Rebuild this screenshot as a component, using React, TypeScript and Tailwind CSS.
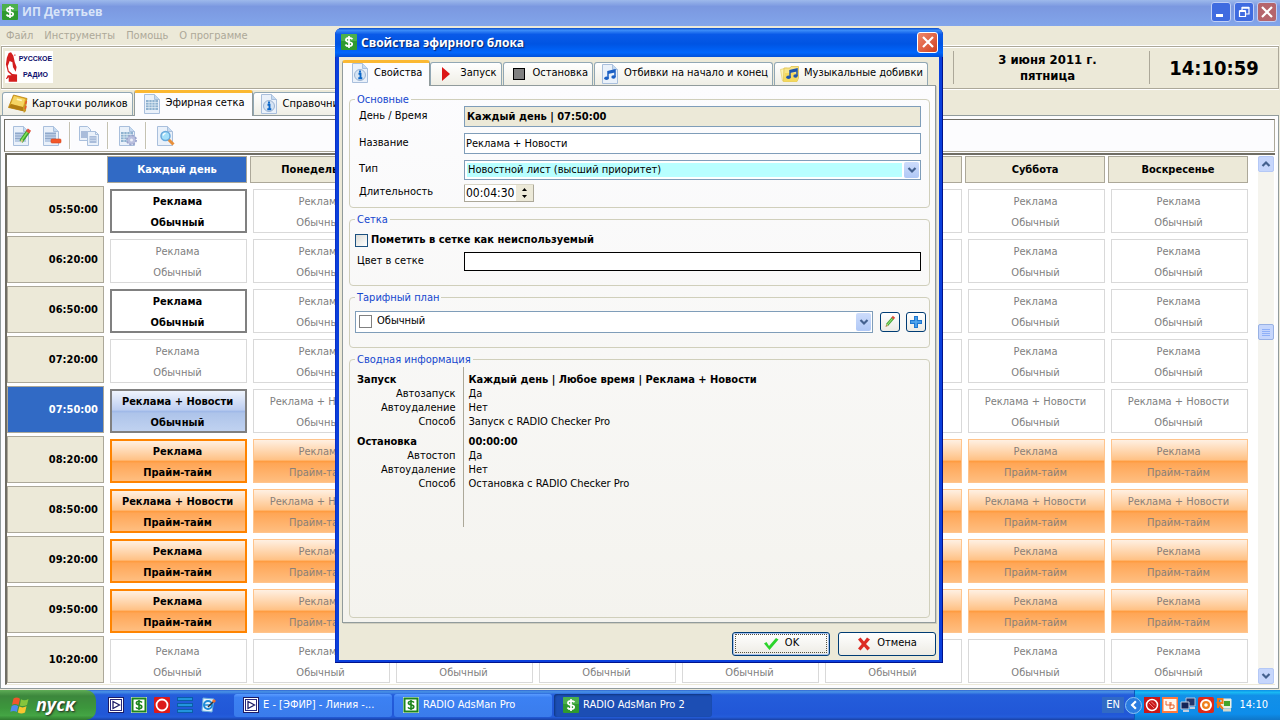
import React from "react";

type IconProps = { className?: string };

const DAYS = ["Каждый день", "Понедельник", "Вторник", "Среда", "Четверг", "Пятница", "Суббота", "Воскресенье"];

type Row = { time: string; title: string; plan: string; daily: boolean; prime?: boolean; selected?: boolean };

const ROWS: Row[] = [
  { time: "05:50:00", title: "Реклама", plan: "Обычный", daily: true },
  { time: "06:20:00", title: "Реклама", plan: "Обычный", daily: false },
  { time: "06:50:00", title: "Реклама", plan: "Обычный", daily: true },
  { time: "07:20:00", title: "Реклама", plan: "Обычный", daily: false },
  { time: "07:50:00", title: "Реклама + Новости", plan: "Обычный", daily: true, selected: true },
  { time: "08:20:00", title: "Реклама", plan: "Прайм-тайм", daily: true, prime: true },
  { time: "08:50:00", title: "Реклама + Новости", plan: "Прайм-тайм", daily: true, prime: true },
  { time: "09:20:00", title: "Реклама", plan: "Прайм-тайм", daily: true, prime: true },
  { time: "09:50:00", title: "Реклама", plan: "Прайм-тайм", daily: true, prime: true },
  { time: "10:20:00", title: "Реклама", plan: "Обычный", daily: false },
];

/* ---------- icons ---------- */

function Dollar({ className = "size-4" }: IconProps) {
  return (
    <svg viewBox="0 0 16 16" className={className} aria-hidden="true">
      <rect width="16" height="16" rx="1" fill="#2f9a2f" />
      <rect width="16" height="7" rx="1" fill="#4cb04c" />
      <path d="M11.500 5.200C10.800 4 9.500 3.800 8 3.800 6.200 3.800 4.900 4.500 4.900 5.900c0 3 6.300 1.200 6.300 4.100 0 1.500-1.400 2.200-3.200 2.200-1.600 0-2.900-.5-3.500-1.700M8 2v12" fill="none" stroke="#fff" strokeWidth="1.700" />
    </svg>
  );
}

function DollarFramed({ className = "size-4" }: IconProps) {
  return (
    <svg viewBox="0 0 16 16" className={className} aria-hidden="true">
      <rect width="16" height="16" fill="#e8f4e8" />
      <rect x="1.500" y="1.500" width="13" height="13" fill="#fff" stroke="#1d851d" strokeWidth="2" />
      <path d="M11 5.500C10.300 4.500 9.300 4.300 8 4.300c-1.500 0-2.600.5-2.600 1.700 0 2.600 5.400 1.200 5.400 3.800 0 1.300-1.200 1.900-2.800 1.900-1.400 0-2.400-.4-3-1.400M8 3v10" fill="none" stroke="#1d851d" strokeWidth="1.600" />
    </svg>
  );
}

function PlayFramed({ className = "size-4" }: IconProps) {
  return (
    <svg viewBox="0 0 16 16" className={className} aria-hidden="true">
      <rect width="16" height="16" fill="#1c1c66" />
      <rect x="1.500" y="1.500" width="13" height="13" fill="#26267c" stroke="#fff" />
      <rect x="3" y="3" width="10" height="10" fill="#fff" />
      <path d="M5 4.500 11.500 8 5 11.500z" fill="#fff" stroke="#1c1c66" strokeWidth="1.300" />
    </svg>
  );
}

function Page({ children, className = "size-[18px]" }: IconProps & { children?: React.ReactNode }) {
  return (
    <svg viewBox="0 0 18 20" className={className} aria-hidden="true">
      <path d="M1.500.5h10l5 5v14h-15z" fill="#eaf1fa" stroke="#a9bfdc" />
      <path d="M11.500.5v5h5" fill="#c5daf0" stroke="#a9bfdc" />
      {children}
    </svg>
  );
}

const InfoPage = ({ className }: IconProps) => (
  <Page className={className}>
    <circle cx="9" cy="12" r="5.500" fill="#d5e3f3" stroke="#9cb4d2" />
    <path d="M9 7.500v2M7.500 10.800H9.500V15M7.300 15.200h4" fill="none" stroke="#0b66c8" strokeWidth="1.900" />
  </Page>
);

const GridPage = ({ className, children }: IconProps & { children?: React.ReactNode }) => (
  <Page className={className}>
    <rect x="3" y="6" width="12" height="10" fill="#8fb2d0" />
    <path d="M3 8.500h12M3 11h12M3 13.500h12M6 6v10M9 6v10M12 6v10" stroke="#e6f0f8" strokeWidth=".7" />
    {children}
  </Page>
);

const TextBlock = () => (
  <>
    <rect x="3" y="6" width="11" height="10" fill="#b9cbe4" />
    <path d="M3 7.500h11M3 10h11M3 12.500h11" stroke="#8fa8cb" />
  </>
);

const EditPage = () => (
  <Page className="h-5 w-[18px] overflow-visible">
    <TextBlock />
    <path d="M9 15.500 16.500 5" stroke="#3aa02c" strokeWidth="4" />
    <path d="M9 15 16 5.200" stroke="#83e05d" strokeWidth="1.500" />
    <path d="m15.500 6.300 2-2.700" stroke="#e0513c" strokeWidth="4" />
    <path d="m8.500 16.800 1-3.300 2 1.500z" fill="#e9c98f" />
  </Page>
);

const DeletePage = () => (
  <Page className="h-5 w-[18px] overflow-visible">
    <TextBlock />
    <rect x="9" y="13" width="10" height="4" rx="1" fill="#f2572a" stroke="#d8431c" strokeWidth=".6" />
  </Page>
);

const CopyPages = () => (
  <svg viewBox="0 0 20 20" className="size-5" aria-hidden="true">
    <path d="M.5.5h8l3 3v11H.5z" fill="#eaf1fa" stroke="#a9bfdc" />
    <path d="M2 5h8v7H2z" fill="#a9bcda" />
    <path d="M8.500 5.500h8l3 3v11h-11z" fill="#eaf1fa" stroke="#a9bfdc" />
    <path d="M16.500 5.500v3h3" fill="none" stroke="#a9bfdc" />
    <path d="M10.500 10h7v7h-7z" fill="#a9bcda" />
    <path d="M10.500 12h7M10.500 14.500h7" stroke="#c8d6ea" />
  </svg>
);

const GearPage = () => (
  <GridPage className="h-5 w-[18px] overflow-visible">
    <circle cx="13.500" cy="14" r="4.500" fill="#b3b9da" stroke="#9aa3cc" strokeWidth="2" strokeDasharray="2 1.500" />
    <circle cx="13.500" cy="14" r="3.800" fill="#b9bfde" />
    <circle cx="13.500" cy="14" r="1.500" fill="#eef0f9" />
  </GridPage>
);

const SearchPage = () => (
  <Page className="h-5 w-[18px] overflow-visible">
    <path d="m12 13 5.500 5.500" stroke="#e88f3a" strokeWidth="3" />
    <circle cx="9.500" cy="10" r="4.500" fill="#a4e0fa" stroke="#69a9dc" strokeWidth="1.500" />
    <path d="M7 9.500a3 3 0 0 1 2.500-2.200" fill="none" stroke="#fff" strokeWidth="1.200" />
  </Page>
);

const NoteGlyph = ({ color = "#1b5fc4" }: { color?: string }) => (
  <>
    <path d="M7 14V7.500l7-1.500v7" fill="none" stroke={color} strokeWidth="1.500" />
    <path d="M7 7.500 14 6v2.500L7 10z" fill={color} />
    <ellipse cx="5.500" cy="14.300" rx="2.300" ry="1.800" fill={color} />
    <ellipse cx="12.500" cy="13" rx="2.200" ry="1.800" fill={color} />
  </>
);

const NotePage = () => (
  <Page className="h-5 w-[18px]">
    <NoteGlyph />
  </Page>
);

const NoteFolder = () => (
  <svg viewBox="0 0 20 18" className="h-[18px] w-5" aria-hidden="true">
    <path d="m.5 4.500 6-1.500 1 12-5 1z" fill="#fdf3b4" stroke="#e6cf6a" strokeWidth=".7" />
    <path d="M4 3h6l1-1.500h7.500V13L17 16.500H3.500z" fill="#f8e58a" stroke="#dfc14c" strokeWidth=".8" />
    <path d="M3.500 16.500 5 8h11l2.500-5-1.500 13.500z" fill="#f5d95d" />
    <g transform="translate(3 -2)">
      <NoteGlyph color="#1f56ae" />
    </g>
  </svg>
);

const CardsIcon = () => (
  <svg viewBox="0 0 20 20" className="size-5" aria-hidden="true">
    <path d="M5.500 1 19 4.500 16 17 .5 13.500z" fill="#e3ad22" stroke="#b98312" strokeWidth=".8" />
    <path d="M6 2 17 5l-2 8L3 10z" fill="#f5d463" />
    <path d="m9 4.500 5 1.200-.4 1.600-5-1.200z" fill="#fff8c8" />
    <path d="M.5 13.500 3 10l12.500 3.200-.3 3.800z" fill="#b27d12" />
    <path d="m15 13 .8 6 2.200-2 .8-11z" fill="#c99a28" />
    <path d="m18.500 7-1 3M18 12l-.8 3" stroke="#e8562e" strokeWidth="1.500" />
  </svg>
);

const Chevron = ({ up = false }: { up?: boolean }) => (
  <svg viewBox="0 0 10 8" className="h-2 w-2.5" aria-hidden="true">
    <path d={up ? "M1.500 6 5 2.500 8.500 6" : "M1.500 2 5 5.500 8.500 2"} fill="none" stroke="#44618f" strokeWidth="2.200" />
  </svg>
);

const CloseGlyph = () => (
  <svg viewBox="0 0 12 12" className="size-3" aria-hidden="true">
    <path d="m1 1 10 10M11 1 1 11" stroke="#fff" strokeWidth="2.200" />
  </svg>
);

const StationLogo = () => (
  <div className="flex h-8 w-12 items-center bg-white">
    <svg viewBox="0 0 14 32" className="h-8 w-[13px] shrink-0" role="img" aria-label="Эмблема">
      <path d="M4 1 6.500 0 9 4l1.500 7 2 5-1 5-3-5-.5-5-3-1.500L3 15l1 5 4 3.500 5 .5v8H4v-5l-2 2H1l2-4h4L3 21 1 13 2 6z" fill="#d41e1e" />
      <path d="M5 12l2.500 1 1.500 6-3 1z" fill="#fff" />
      <path d="M10 2.500h1.200V4H10z" fill="#d41e1e" />
    </svg>
    <div className="w-[35px] text-center font-['Liberation_Sans_Narrow','Liberation_Sans',sans-serif] text-[7px] font-bold leading-4 text-[#0c0c6c]">
      <div>РУССКОЕ</div>
      <div>РАДИО</div>
    </div>
  </div>
);

const WindowsFlag = () => (
  <svg viewBox="0 0 20 20" className="size-5" aria-hidden="true">
    <path d="M3.500 3.500C6 2 8 2.500 10 3.800L8.500 10C6.500 8.700 4.500 8.500 2 9.700z" fill="#f0562c" />
    <path d="M11 4.300c2.500 1.300 4.500 1.200 7.500-.3L17 10c-2.500 1.300-4.500 1.500-7.200.4z" fill="#86c53c" />
    <path d="M1.700 10.900c2.500-1.200 4.500-1 6.500.3L6.800 17C4.800 15.700 2.800 15.600.3 16.800z" fill="#4f8bee" />
    <path d="M9.300 11.600c2.500 1.200 4.500 1 7.200-.3L15 17.400c-2.600 1.300-4.600 1.300-7.200 0z" fill="#f8c630" />
  </svg>
);

/* ---------- shared pieces ---------- */

function Tab({ active = false, icon, children }: { active?: boolean; icon: React.ReactNode; children: React.ReactNode }) {
  return (
    <button
      type="button"
      role="tab"
      aria-selected={active}
      className={
        active
          ? "z-10 -mb-px flex h-[26px] items-center gap-1 rounded-t-[3px] border border-b-0 border-t-[3px] border-[#919b9c] border-t-[#fbb832] bg-[#fcfcfe] px-[7px] pb-0.5"
          : "mr-px flex h-[23px] items-center gap-1 rounded-t-[3px] border border-b-0 border-[#91a7b4] bg-linear-to-b from-white to-[#efeee5] pl-[5px] pr-1"
      }
    >
      <span className="flex w-5 justify-center">{icon}</span>
      <span className="whitespace-nowrap">{children}</span>
    </button>
  );
}

function Group({ title, className = "", children }: { title: string; className?: string; children: React.ReactNode }) {
  return (
    <fieldset className={"min-w-0 rounded-[4px] border border-[#d0cfbb] pl-[5px] pr-[3px] " + className}>
      <legend className="px-0.5 leading-3 text-[#1446ce]">{title}</legend>
      {children}
    </fieldset>
  );
}

function DropArrow() {
  return (
    <span className="pointer-events-none flex h-full w-[15px] items-center justify-center rounded-[2px] bg-linear-to-b from-[#cddcfb] to-[#b0c8f6]">
      <Chevron />
    </span>
  );
}

function Separator() {
  return <div className="h-[27px] w-0.5 border-l border-r border-l-[#c5c2b2] border-r-white" />;
}

function ToolButton({ label, children }: { label: string; children: React.ReactNode }) {
  return (
    <button type="button" aria-label={label} className="flex w-[30px] items-center justify-center">
      {children}
    </button>
  );
}

/* ---------- main window ---------- */

function MainTitle() {
  return (
    <header className="flex h-[26px] items-center gap-1 bg-linear-to-b from-[#9db9eb] via-[#7b98e0] via-25% to-[#82a5ea] pb-0.5 pl-0.5 pr-[3px]">
      <Dollar className="size-4" />
      <h1 className="flex-1 font-['Open_Sans','DejaVu_Sans',sans-serif] text-[12px] font-bold text-[#d8e4f8]">ИП Детятьев</h1>
      <div className="flex gap-[3px]">
        <button type="button" aria-label="Свернуть" className="flex h-5 w-5 items-end rounded-[3px] border border-[#c0cff5] bg-[#3f6be0] p-1">
          <span className="h-[3px] w-[7px] bg-white" />
        </button>
        <button type="button" aria-label="Восстановить" className="flex size-5 items-center justify-center rounded-[3px] border border-[#c0cff5] bg-[#3f6be0]">
          <svg viewBox="0 0 12 12" className="size-3" aria-hidden="true">
            <path d="M4 4V1.500h7V8H8M1.500 5h6v5.500h-6z" fill="none" stroke="#fff" strokeWidth="1.200" />
            <path d="M4 1.800h7M1.500 5h6" stroke="#fff" strokeWidth="2" />
          </svg>
        </button>
        <button type="button" aria-label="Закрыть" className="flex size-5 items-center justify-center rounded-[3px] border border-[#c0cff5] bg-[#b5656c]">
          <CloseGlyph />
        </button>
      </div>
    </header>
  );
}

function InfoBar() {
  return (
    <section className="mx-px flex h-[43px] items-stretch border border-[#aca899] bg-[#ece9d8] py-1 pl-[3px] font-bold shadow-[0_-1px_0_#fff,inset_1px_1px_0_#fff,0_1px_0_#fff]">
      <StationLogo />
      <div className="flex-1" />
      <div className="flex w-[196px] flex-col items-center justify-center border-l border-[#aca899] pr-2 text-[13px] leading-4">
        <span>3 июня 2011 г.</span>
        <span>пятница</span>
      </div>
      <div className="flex w-[129px] items-center justify-center border-l border-[#aca899] text-[20px]">14:10:59</div>
    </section>
  );
}

function cellStyle(row: Row, first: boolean) {
  if (row.prime) {
    const fill = "bg-[linear-gradient(#fff0e2,#ffc184_48%,#ff9a3c_50%,#ffa656_56%,#ffbe80)]";
    return first
      ? fill + " border-2 border-[#ff8400] font-bold text-black"
      : fill + " border border-[#ffc48c] text-[#8a8078]";
  }
  if (first && row.selected) return "border-2 border-[#808080] bg-[linear-gradient(#eff4fd,#bccdf0_48%,#9db7e8_50%,#aec4ea_56%,#c0d2f0)] font-bold text-black";
  if (first && row.daily) return "border-2 border-[#808080] bg-white font-bold text-black";
  return "border border-[#d9d9d9] bg-white text-[#808080]";
}

function Schedule() {
  return (
    <div className="ml-px flex min-h-0 flex-1 border-2 border-b border-r-0 border-[#6f6d64] border-b-[#ece9d8] bg-white pr-px pt-px">
      <div className="min-w-0 flex-1 overflow-hidden">
        <table className="w-full table-fixed border-collapse">
          <colgroup>
            <col className="w-[100px]" />
            {DAYS.map((d) => (
              <col key={d} />
            ))}
          </colgroup>
          <thead>
            <tr className="h-[30px]">
              <td className="p-0" />
              {DAYS.map((d, i) => (
                <th key={d} scope="col" className="p-0 pb-[3px] pr-[3px]">
                  <div className={"flex h-[27px] items-center justify-center border border-[#aca899] pt-0.5 " + (i === 0 ? "bg-[#316ac5] text-white" : "bg-[#ece9d8]")}>{d}</div>
                </th>
              ))}
            </tr>
          </thead>
          <tbody>
            {ROWS.map((row) => (
              <tr key={row.time}>
                <th scope="row" className="p-0 pb-[3px] pr-[3px]">
                  <div className={"flex h-[47px] items-center justify-end border border-[#aca899] pr-[5px] pt-0.5 " + (row.selected ? "bg-[#316ac5] text-white" : "bg-[#ece9d8]")}>{row.time}</div>
                </th>
                {DAYS.map((d, i) => (
                  <td key={d} className="p-[3px]">
                    <div className={"flex h-11 flex-col items-center justify-center pr-0.5 pt-px leading-[21px] " + cellStyle(row, i === 0)}>
                      <span>{row.title}</span>
                      <span>{row.plan}</span>
                    </div>
                  </td>
                ))}
              </tr>
            ))}
          </tbody>
        </table>
      </div>
      <div className="ml-[7px] flex w-4 flex-col bg-[#f5f4ee]">
        <button type="button" aria-label="Вверх" className="flex h-4 items-center justify-center rounded-[2px] border border-[#b4c8f6] bg-[#c6d6fc]">
          <Chevron up />
        </button>
        <div className="flex-[19]" />
        <div className="flex h-4 flex-col items-center justify-center gap-px rounded-[2px] border border-[#98b1e4] bg-[#c6d6fc]">
          {[0, 1, 2, 3].map((n) => (
            <span key={n} className="h-px w-2 bg-[#8fb0f8]" />
          ))}
        </div>
        <div className="flex-[41]" />
        <button type="button" aria-label="Вниз" className="flex h-4 items-center justify-center rounded-[2px] border border-[#b4c8f6] bg-[#c6d6fc]">
          <Chevron />
        </button>
      </div>
    </div>
  );
}

/* ---------- dialog ---------- */

type SummaryRow = { name: string; value: string; head?: boolean };

const SUMMARY: SummaryRow[] = [
  { name: "Запуск", value: "Каждый день | Любое время | Реклама + Новости", head: true },
  { name: "Автозапуск", value: "Да" },
  { name: "Автоудаление", value: "Нет" },
  { name: "Способ", value: "Запуск с RADIO Checker Pro" },
  { name: "Остановка", value: "00:00:00", head: true },
  { name: "Автостоп", value: "Да" },
  { name: "Автоудаление", value: "Нет" },
  { name: "Способ", value: "Остановка с RADIO Checker Pro" },
];

function Summary() {
  return (
    <table className="mt-px w-full border-collapse leading-[14px]">
      <tbody>
        {SUMMARY.map((r, i) => (
          <tr key={i} className={r.head ? "h-5 align-bottom" : "h-[14px]"}>
            <th scope="row" className={"w-[108px] border-r border-[#aca899] p-0 " + (r.head ? "pl-0.5 text-left font-bold" : "pr-[7px] text-right font-normal")}>
              {r.name}
            </th>
            <td className={"p-0 pl-[5px] " + (r.head ? "font-bold" : "")}>{r.value}</td>
          </tr>
        ))}
        <tr className="h-9">
          <td className="border-r border-[#aca899]" />
          <td />
        </tr>
      </tbody>
    </table>
  );
}

function SmallButton({ label, children }: { label: string; children: React.ReactNode }) {
  return (
    <button type="button" aria-label={label} className="flex size-5 items-center justify-center rounded-[3px] border border-[#003c74] bg-linear-to-b from-white to-[#ecebe5]">
      {children}
    </button>
  );
}

function Dialog() {
  return (
    <div role="dialog" aria-labelledby="dialog-title" className="flex w-[608px] flex-col rounded-t-[7px] bg-[#0a3fdc] px-1 pb-[3px] shadow-[inset_-1px_-1px_0_#00138c,inset_1px_0_0_#0a2fc4]">
      <div className="-mx-1 flex h-[29px] items-center gap-1 rounded-t-[7px] bg-[linear-gradient(#0a4cc8,#3c8cf8_8%,#0a5ae8_22%,#0054e3_55%,#0066fc_85%,#0050d8)] pl-1.5 pr-[5px]">
        <Dollar className="size-4" />
        <h2 id="dialog-title" className="flex-1 pt-px font-['Open_Sans','DejaVu_Sans',sans-serif] text-[12px] font-bold text-white [text-shadow:1px_1px_1px_#0a246a]">Свойства эфирного блока</h2>
        <button type="button" aria-label="Закрыть" className="flex size-[21px] items-center justify-center rounded-[3px] border border-white bg-linear-to-br from-[#f0876a] to-[#d0401c]">
          <CloseGlyph />
        </button>
      </div>
      <div className="flex flex-col bg-[#ece9d8] px-[3px] pt-[3px]">
        <div role="tablist" className="flex items-end">
          <Tab active icon={<InfoPage className="h-5 w-[18px]" />}>Свойства</Tab>
          <Tab icon={<svg viewBox="0 0 10 16" className="h-4 w-2.5" aria-hidden="true"><path d="M1 1v14l8-7z" fill="#dc1616" /></svg>}>Запуск</Tab>
          <Tab icon={<span className="size-3 border border-black bg-[#808080]" />}>Остановка</Tab>
          <Tab icon={<NotePage />}>Отбивки на начало и конец</Tab>
          <Tab icon={<NoteFolder />}>Музыкальные добивки</Tab>
        </div>
        <form className="flex flex-col gap-1.5 border border-[#919b9c] bg-linear-to-b from-[#fcfcfe] to-[#f4f3ee] px-[5px] pb-1 pl-1.5 pt-2 shadow-[1px_1px_0_#d0cebf]" onSubmit={(e) => e.preventDefault()}>
          <Group title="Основные" className="pb-[5px]">
            <div className="flex flex-col gap-1.5 pl-1 pr-[5px]">
              <div className="flex h-[21px] items-center">
                <label htmlFor="day" className="w-[105px]">День / Время</label>
                <input id="day" readOnly defaultValue="Каждый день | 07:50:00" className="h-full min-w-0 flex-1 border border-[#7f9db9] bg-[#ece9d8] px-0.5 font-bold outline-none" />
              </div>
              <div className="flex h-[21px] items-center">
                <label htmlFor="name" className="w-[105px]">Название</label>
                <input id="name" defaultValue="Реклама + Новости" className="h-full min-w-0 flex-1 border border-[#7f9db9] bg-white px-px outline-none" />
              </div>
              <div className="flex h-5 items-center">
                <label htmlFor="kind" className="w-[105px]">Тип</label>
                <div className="flex h-full min-w-0 flex-1 items-center gap-0.5 border border-[#7f9db9] bg-white p-px">
                  <select id="kind" className="ml-px h-3.5 min-w-0 flex-1 appearance-none bg-[#b8ffff] px-px leading-[14px] outline-none">
                    <option>Новостной лист (высший приоритет)</option>
                  </select>
                  <DropArrow />
                </div>
              </div>
            </div>
            <div className="mt-1 flex h-[18px] items-center pl-1">
              <label htmlFor="length" className="w-[105px]">Длительность</label>
              <div className="flex h-full w-[70px] border-b border-t border-b-[#aca899] border-t-[#d8d5c6] bg-[#ece9d8]">
                <input id="length" defaultValue="00:04:30" className="w-[52px] border-l border-[#aca899] bg-white pl-px text-[12px] outline-none" />
                <span className="flex flex-1 flex-col items-center justify-center gap-1 border-r border-[#aca899]">
                  <button type="button" aria-label="Больше"><svg viewBox="0 0 5 3" className="block h-[3px] w-[5px]"><path d="M2.500 0 5 3H0z" /></svg></button>
                  <button type="button" aria-label="Меньше"><svg viewBox="0 0 5 3" className="block h-[3px] w-[5px]"><path d="M2.500 3 5 0H0z" /></svg></button>
                </span>
              </div>
            </div>
          </Group>

          <Group title="Сетка" className="pb-3.5">
            <div className="mt-2 flex h-[13px] items-center gap-[3px]">
              <input id="unused" type="checkbox" className="size-[13px] appearance-none border border-[#1c5180] bg-linear-to-br from-[#dcdcd7] to-white" />
              <label htmlFor="unused" className="font-bold">Пометить в сетке как неиспользуемый</label>
            </div>
            <div className="mt-[5px] flex h-[19px] items-center pl-0.5 pr-[5px]">
              <label htmlFor="tint" className="w-[107px]">Цвет в сетке</label>
              <input id="tint" readOnly className="h-full min-w-0 flex-1 border border-black bg-white outline-none" />
            </div>
          </Group>

          <Group title="Тарифный план" className="pb-3.5">
            <div className="mt-[7px] flex h-[22px] items-center">
              <div className="flex h-full min-w-0 flex-1 items-center border border-[#7f9db9] bg-white p-px">
                <span className="ml-0.5 size-[13px] border border-[#808080] bg-white" />
                <select id="plan" aria-label="Тарифный план" className="min-w-0 flex-1 appearance-none bg-transparent pl-[5px] outline-none">
                  <option>Обычный</option>
                </select>
                <DropArrow />
              </div>
              <div className="ml-[7px] flex gap-1.5">
                <SmallButton label="Изменить">
                  <svg viewBox="0 0 14 14" className="size-3.5" aria-hidden="true">
                    <path d="m4 10 6-7" stroke="#4aa83c" strokeWidth="2.800" />
                    <path d="m4 10 5.500-6.500" stroke="#a2ec7c" />
                    <path d="m9.500 3.500 1.500-1.700" stroke="#dc4a38" strokeWidth="3" />
                    <path d="m2.500 12 .7-2.600 1.800 1.500z" fill="#b78a4a" />
                  </svg>
                </SmallButton>
                <SmallButton label="Добавить">
                  <svg viewBox="0 0 14 14" className="size-3.5" aria-hidden="true">
                    <path d="M7 1v12M1 7h12" stroke="#1e78d2" strokeWidth="4" />
                    <path d="M7 2v10M2 7h10" stroke="#58aaf0" strokeWidth="1.500" />
                  </svg>
                </SmallButton>
              </div>
            </div>
          </Group>

          <Group title="Сводная информация" className="min-h-[264px]">
            <Summary />
          </Group>
        </form>
        <div className="flex justify-end gap-2 pb-1 pt-[9px]">
          <button type="button" className="flex h-6 w-[98px] items-center justify-center gap-1.5 rounded-[3px] border border-[#003c74] bg-linear-to-b from-white to-[#edebe4] shadow-[inset_0_0_0_1px_#a8c2ee]">
            <span className="flex h-[19px] w-[92px] items-center justify-center gap-1.5 border border-dotted border-[#55513f]">
              <svg viewBox="0 0 16 14" className="h-3.5 w-4" aria-hidden="true"><path d="M1 6.500 3.500 5 6 9l7-8 2.500 1.500L6.500 13z" fill="#2bd42b" /></svg>
              OK
            </span>
          </button>
          <button type="button" className="flex h-6 w-[98px] items-center justify-center gap-1.5 rounded-[3px] border border-[#003c74] bg-linear-to-b from-white to-[#edebe4]">
            <svg viewBox="0 0 14 14" className="size-3.5" aria-hidden="true"><path d="m1 2.500 2.500-2L7 4.500l3-4 3 2L9 7l4 4-2.500 2.500L7 9.500l-3.500 4L1 11.500 4.800 7z" fill="#dc2a22" /></svg>
            Отмена
          </button>
        </div>
      </div>
    </div>
  );
}

/* ---------- taskbar ---------- */

function Task({ icon, active = false, children }: { icon: React.ReactNode; active?: boolean; children: React.ReactNode }) {
  return (
    <button
      type="button"
      className={
        "flex h-[23px] w-[158px] items-center gap-1 rounded-[3px] pl-[9px] text-white " +
        (active ? "bg-[#1c4eb4] shadow-[inset_1px_1px_2px_#0f357f]" : "bg-linear-to-b from-[#5a9bff] via-[#3c81f3] via-15% to-[#3a7cec]")
      }
    >
      {icon}
      <span className="whitespace-nowrap">{children}</span>
    </button>
  );
}

function Taskbar() {
  return (
    <footer className="flex h-[30px] shrink-0 items-center bg-[linear-gradient(#3168d5,#4993e6_6%,#245ddb_16%,#2157d7_80%,#245ddb_90%,#1941a5)] text-white">
      <button type="button" className="flex h-full w-24 items-center gap-1.5 rounded-r-[10px] bg-[linear-gradient(#5eac56,#3c873c_20%,#3c973c_60%,#44a544_85%,#2f7a2f)] pl-2.5 font-['Open_Sans','Liberation_Sans',sans-serif] text-[18px] font-bold italic [text-shadow:1px_1px_2px_#222]">
        <WindowsFlag />
        <span className="pb-0.5">пуск</span>
      </button>
      <nav className="flex w-[138px] gap-[7px] pl-3" aria-label="Быстрый запуск">
        <a href="#air" aria-label="Эфир"><PlayFramed /></a>
        <a href="#adsman" aria-label="AdsMan"><DollarFramed /></a>
        <a href="#opera" aria-label="Opera">
          <svg viewBox="0 0 16 16" className="size-4"><rect width="16" height="16" rx="1" fill="#dc1a1a" /><circle cx="8" cy="8" r="5.500" fill="none" stroke="#fff" strokeWidth="1.800" /></svg>
        </a>
        <a href="#radio" aria-label="Radio">
          <svg viewBox="0 0 16 16" className="size-4"><path d="M0 2h16M0 8h16M0 14h16" stroke="#0a5ea8" strokeWidth="4" /><path d="M1 2h14M1 8h14M1 14h14" stroke="#2aa8ee" strokeWidth="1.500" /></svg>
        </a>
        <a href="#ie" aria-label="Интернет">
          <svg viewBox="0 0 16 16" className="size-4"><path d="m3 1 11 1-2 13-10-1z" fill="#e8f4fc" stroke="#6aaede" /><circle cx="8" cy="8" r="4" fill="none" stroke="#1c8ad8" strokeWidth="2" /><path d="M5 8h6" stroke="#1c8ad8" strokeWidth="1.500" /><path d="m8 10 6-6" stroke="#30343c" strokeWidth="1.500" /><path d="m13 5 2-2" stroke="#f07030" strokeWidth="3" /></svg>
        </a>
      </nav>
      <div className="flex flex-1 gap-0.5">
        <Task icon={<PlayFramed />}>E - [ЭФИР] -  Линия -...</Task>
        <Task icon={<DollarFramed />}>RADIO AdsMan Pro</Task>
        <Task active icon={<Dollar />}>RADIO AdsMan Pro 2</Task>
      </div>
      <span className="mr-2.5 bg-[#316ac5] px-1 leading-4">EN</span>
      <div className="flex h-full w-[146px] items-center border-l border-[#0c59b9] bg-[linear-gradient(#0c8ee8,#19b9f3_8%,#1290e8_18%,#0d8dea_80%,#0f76c8)]">
        <button type="button" aria-label="Показать скрытые значки" className="-ml-2.5 flex size-[17px] items-center justify-center rounded-full border border-[#8cc4f4] bg-[#2a7ce0]">
          <svg viewBox="0 0 8 8" className="size-2.5"><path d="M5.500 1 2.500 4l3 3" fill="none" stroke="#fff" strokeWidth="1.800" /></svg>
        </button>
        <div className="ml-0.5 flex flex-1 gap-0.5">
          <svg viewBox="0 0 16 16" className="size-4"><rect width="16" height="16" fill="#c81818" /><circle cx="8" cy="8" r="5.500" fill="#c81818" stroke="#fff" strokeWidth="1.500" /><path d="m5 6 5 5M7 4.500l4 4" stroke="#f08080" /></svg>
          <svg viewBox="0 0 16 16" className="size-4"><rect width="16" height="16" fill="#ff7a3c" /><rect x="1.500" y="2" width="13" height="12" fill="#fff6ee" /><path d="M4 4v4h5V5M8 5v7l4-1V8H8" fill="none" stroke="#e8622c" /></svg>
          <svg viewBox="0 0 16 16" className="size-4"><path d="M6 1h9v8H6z" fill="#23366e" stroke="#b8c4dc" /><path d="M1 5h8v7H1z" fill="#142458" stroke="#c4cee0" /><path d="M3 14h6M10 11h5" stroke="#c4cee0" strokeWidth="2" /></svg>
          <svg viewBox="0 0 16 16" className="size-4"><rect width="16" height="16" rx="2" fill="#dc2a1a" /><circle cx="8" cy="8" r="6" fill="#fff" /><circle cx="8" cy="8" r="4" fill="#f0801c" /><circle cx="8" cy="8" r="1.800" fill="#fff" /></svg>
          <svg viewBox="0 0 16 16" className="size-4"><path d="M5 2h10v9H5z" fill="#e8f0dc" stroke="#f0f0f0" /><path d="M8 4h6v5H8z" fill="#42a42c" /><path d="M7 13h8" stroke="#d8d8c8" strokeWidth="3" /><path d="M2 11V2h4.500v4H2l5 6" fill="none" stroke="#f07818" strokeWidth="2" /></svg>
        </div>
        <time className="pr-3">14:10</time>
      </div>
    </footer>
  );
}

export default function App() {
  return (
    <div className="flex h-screen flex-col overflow-hidden bg-[#ece9d8] font-['DejaVu_Sans_Condensed','DejaVu_Sans',sans-serif] text-[11px] text-black">
      <div className="relative flex min-h-0 flex-1 flex-col pb-px">
        <MainTitle />
        <nav className="flex h-5 items-center gap-[11px] pl-1.5 text-[#aca899]">
          <button type="button">Файл</button>
          <button type="button">Инструменты</button>
          <button type="button">Помощь</button>
          <button type="button">О программе</button>
        </nav>
        <InfoBar />
        <div role="tablist" className="flex h-[26px] items-end pl-0.5">
          <Tab icon={<CardsIcon />}>Карточки роликов</Tab>
          <Tab active icon={<GridPage className="h-5 w-[18px]" />}>Эфирная сетка</Tab>
          <Tab icon={<InfoPage className="h-5 w-[18px]" />}>Справочники</Tab>
        </div>
        <main className="mr-px flex min-h-0 flex-1 flex-col border border-[#919b9c] bg-[#fcfcfe] p-[3px]">
          <div role="toolbar" className="mb-px flex h-[33px] items-center gap-[3px] border border-[#aca899] border-l-[#6f6d64] border-t-[#6f6d64] pl-px">
            <div className="flex"><ToolButton label="Изменить блок"><EditPage /></ToolButton><ToolButton label="Удалить блок"><DeletePage /></ToolButton></div>
            <Separator />
            <ToolButton label="Копировать"><CopyPages /></ToolButton>
            <Separator />
            <ToolButton label="Настройки сетки"><GearPage /></ToolButton>
            <Separator />
            <ToolButton label="Поиск"><SearchPage /></ToolButton>
          </div>
          <Schedule />
        </main>
        <div className="absolute inset-0 z-20 flex items-center justify-center pr-0.5">
          <Dialog />
        </div>
      </div>
      <Taskbar />
    </div>
  );
}
